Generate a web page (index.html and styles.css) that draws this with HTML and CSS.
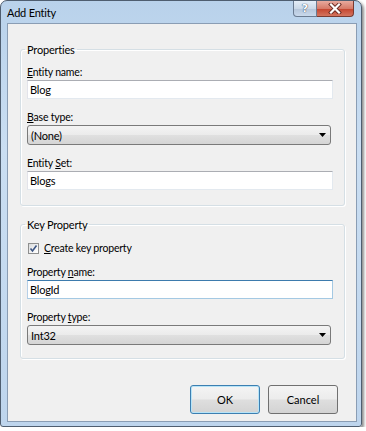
FILE: index.html
```html
<!DOCTYPE html>
<html lang="en">
<head>
    <meta charset="UTF-8">
    <title>Add Entity</title>
    <link rel="stylesheet" href="styles.css">
</head>
<body>

    <div class="window">
        <div class="titlebar">
            <span class="title">Add Entity</span>
            <div class="caption-buttons">
                <span class="cap-btn help">?</span>
                <span class="cap-btn close">
                    <svg width="14" height="11" viewBox="0 0 14 11">
                        <path d="M3 1.5 L11 9.5 M11 1.5 L3 9.5" stroke="#6a2a22" stroke-width="4" stroke-linecap="square"/>
                        <path d="M3 1.5 L11 9.5 M11 1.5 L3 9.5" stroke="#ffffff" stroke-width="2.2" stroke-linecap="square"/>
                    </svg>
                </span>
            </div>
        </div>

        <div class="client">
            <fieldset class="group group-props">
                <legend>Properties</legend>

                <label class="field-label"><u>E</u>ntity name:</label>
                <div class="textbox">Blog</div>

                <label class="field-label spaced"><u>B</u>ase type:</label>
                <div class="combo">
                    <span>(None)</span>
                    <svg class="arrow" width="7" height="4" viewBox="0 0 7 4"><path d="M0 0 H7 L3.5 4 Z" fill="#000"/></svg>
                </div>

                <label class="field-label spaced">Entity <u>S</u>et:</label>
                <div class="textbox">Blogs</div>
            </fieldset>

            <fieldset class="group group-key">
                <legend>Key Property</legend>

                <div class="check-row">
                    <span class="checkbox">
                        <svg width="9" height="9" viewBox="0 0 9 9"><path d="M1.5 4.5 L3.5 7 L7.5 1.5" fill="none" stroke="#3c5583" stroke-width="1.6"/></svg>
                    </span>
                    <span><u>C</u>reate key property</span>
                </div>

                <label class="field-label check-gap">Property <u>n</u>ame:</label>
                <div class="textbox focused">BlogId</div>

                <label class="field-label spaced">Property <u>t</u>ype:</label>
                <div class="combo">
                    <span>Int32</span>
                    <svg class="arrow" width="7" height="4" viewBox="0 0 7 4"><path d="M0 0 H7 L3.5 4 Z" fill="#000"/></svg>
                </div>
            </fieldset>

            <div class="actions">
                <button class="btn default">OK</button>
                <button class="btn">Cancel</button>
            </div>
        </div>
    </div>

</body>
</html>
```

FILE: styles.css
```css
body {
    margin: 0;
    background-color: #ffffff;
    font-family: Lato, "Open Sans", sans-serif;
    font-size: 10.5px;
    letter-spacing: -0.2px;
    color: #000000;
}
.window {
    width: 362px;
    height: 427px;
    box-sizing: border-box;
    border: 1px solid #4f5e70;
    border-radius: 7px 7px 3px 3px;
    background: linear-gradient(to bottom, #b9d2eb 0%, #cadef2 35%, #bed5ed 100%);
    box-shadow: 2px 2px 3px rgba(0, 0, 0, 0.45);
    display: flex;
    flex-direction: column;
}
.titlebar {
    height: 22px;
    display: flex;
    align-items: flex-start;
    padding-left: 6px;
}
.title {
    line-height: 22px;
    padding-top: 1px;
    font-size: 11px;
}
.caption-buttons {
    margin-left: auto;
    margin-right: 7px;
    display: flex;
}
.cap-btn {
    height: 16px;
    box-sizing: border-box;
    border: 1px solid #6a7b91;
    border-top: none;
    display: flex;
    align-items: center;
    justify-content: center;
}
.help {
    width: 24px;
    border-radius: 0 0 0 4px;
    background: linear-gradient(to bottom, #e4eef8 0%, #cbd9e8 50%, #b4c5da 51%, #c9d9ec 100%);
    color: #ffffff;
    font-family: "DejaVu Sans", sans-serif;
    font-weight: bold;
    font-size: 11px;
    letter-spacing: 0;
    text-shadow: 0 0 1px #33475f, 0 0 1px #33475f;
}
.close {
    width: 37px;
    border-left: none;
    border-color: #7a3a30;
    border-radius: 0 0 4px 0;
    background: linear-gradient(to bottom, #e8aa9e 0%, #d67b69 50%, #c4432d 51%, #d3745f 100%);
}
.client {
    flex: 1;
    margin: 0 4px 4px 6px;
    background-color: #f0f0f0;
    border: 1px solid #8a9db4;
    padding: 0 11px 0 12px;
    display: flex;
    flex-direction: column;
}
.group {
    margin: 0;
    min-width: 0;
    border: 1px solid #d5dfe5;
    border-radius: 3px;
    box-shadow: inset 1px 1px 0 #ffffff, 1px 1px 0 #ffffff;
    padding: 8px 11px 15px 6px;
}
.group-props {
    margin-top: 18px;
}
.group-key {
    margin-top: 11px;
    padding-top: 9px;
    padding-bottom: 13px;
}
legend {
    padding: 0 2px;
    margin-left: -2px;
    line-height: 15px;
    font-size: 11px;
}
.field-label {
    display: block;
    line-height: 15px;
}
.spaced {
    margin-top: 11px;
}
.check-gap {
    margin-top: 9px;
}
.textbox {
    height: 19px;
    box-sizing: border-box;
    background-color: #ffffff;
    border: 1px solid;
    border-color: #abadb3 #e3e9ef #e3e9ef #e2e3ea;
    padding-left: 2px;
    line-height: 17px;
    font-size: 11px;
}
.textbox.focused {
    border-color: #3d7bad #a4c9e3 #a4c9e3 #b5cfe7;
}
.combo {
    height: 20px;
    box-sizing: border-box;
    margin-right: 2px;
    border: 1px solid #7a7a7a;
    border-radius: 3px;
    background: linear-gradient(to bottom, #f4f4f4 0%, #ebebeb 50%, #e0e0e0 51%, #d5d5d5 100%);
    display: flex;
    align-items: center;
    padding: 0 4px 0 3px;
    font-size: 11px;
}
.arrow {
    margin-left: auto;
}
.check-row {
    display: flex;
    align-items: center;
    gap: 5px;
    line-height: 15px;
    padding-left: 1px;
}
.checkbox {
    width: 11px;
    height: 11px;
    box-sizing: border-box;
    border: 1px solid #8e8f8f;
    background: linear-gradient(135deg, #d8dadc 0%, #f4f4f4 60%, #ffffff 100%);
    display: flex;
    align-items: center;
    justify-content: center;
}
.actions {
    margin-top: auto;
    display: flex;
    justify-content: flex-end;
    gap: 8px;
    padding: 0 7px 7px 0;
}
.btn {
    width: 70px;
    height: 29px;
    border: 1px solid #707070;
    border-radius: 3px;
    background: linear-gradient(to bottom, #f4f4f4 0%, #ececec 48%, #dedede 52%, #d3d3d3 100%);
    font: inherit;
    font-size: 11px;
    color: #000000;
    padding: 0;
}
.btn.default {
    border-color: #3c7fb1;
    box-shadow: inset 0 0 0 1px #b7e4f8;
}
```
